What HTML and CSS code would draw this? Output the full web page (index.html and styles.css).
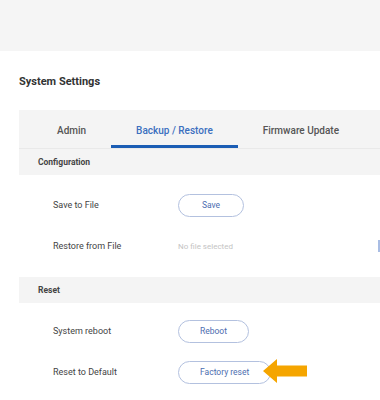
FILE: index.html
```html
<!DOCTYPE html>
<html lang="en">
<head>
    <meta charset="UTF-8">
    <meta name="viewport" content="width=device-width, initial-scale=1.0">
    <title>System Settings</title>
    <link rel="stylesheet" href="styles.css">
</head>
<body>
    <div class="topbar"></div>

    <div class="page">
        <h1>System Settings</h1>

        <div class="panel">
            <div class="tabs">
                <span class="tab">Admin</span>
                <span class="tab active">Backup / Restore</span>
                <span class="tab">Firmware Update</span>
            </div>

            <div class="section-head">Configuration</div>
            <div class="section-body">
                <div class="row">
                    <span class="label">Save to File</span>
                    <button class="btn">Save</button>
                </div>
                <div class="row">
                    <span class="label">Restore from File</span>
                    <span class="file-name">No file selected</span>
                    <span class="browse-edge"></span>
                </div>
            </div>

            <div class="section-head">Reset</div>
            <div class="section-body reset">
                <div class="row">
                    <span class="label">System reboot</span>
                    <button class="btn">Reboot</button>
                </div>
                <div class="row">
                    <span class="label">Reset to Default</span>
                    <span class="btn-wrap">
                        <button class="btn">Factory reset</button>
                        <svg class="pointer" width="44" height="26" viewBox="0 0 44 26">
                            <polygon points="0,13 14,1 14,7.5 44,7.5 44,18.5 14,18.5 14,25" fill="#f5a500"/>
                        </svg>
                    </span>
                </div>
            </div>
        </div>
    </div>
</body>
</html>
```

FILE: styles.css
```css
body {
    margin: 0;
    font-family: Roboto, "Liberation Sans", sans-serif;
    color: #333;
    overflow: hidden;
    background: #fff;
}
.topbar {
    height: 51px;
    background-color: #f5f5f5;
}
.page {
    padding: 24px 0 0 19px;
}
h1 {
    margin: 0 0 21px;
    font-size: 11px;
    line-height: 14px;
    font-weight: bold;
    color: #333;
}
.panel {
    width: 420px;
}
.tabs {
    display: flex;
    height: 38px;
    padding-left: 13px;
    background-color: #f4f4f4;
    border-bottom: 1px solid #e9e9e9;
}
.tab {
    display: flex;
    align-items: center;
    padding: 5px 25px 0;
    border-bottom: 3px solid transparent;
    font-size: 10px;
    font-weight: 500;
    color: #555;
}
.tab.active {
    color: #3b6fbf;
    border-bottom-color: #1b5db4;
}
.section-head {
    height: 26px;
    line-height: 26px;
    padding-left: 19px;
    background-color: #f4f4f4;
    font-size: 8.5px;
    font-weight: bold;
    color: #444;
}
.section-body {
    padding: 10px 0 10px;
}
.section-body.reset {
    padding: 8px 0;
}
.row {
    display: flex;
    align-items: center;
    height: 40px;
    padding-left: 34px;
}
.row + .row {
    height: 42px;
}
.label {
    width: 125px;
    font-size: 9px;
    color: #444;
}
.file-name {
    width: 200px;
    font-size: 8px;
    color: #c4c4c4;
}
.browse-edge {
    width: 40px;
    height: 12px;
    border-left: 2px solid #a9bde4;
}
.btn {
    min-width: 66px;
    height: 23px;
    padding: 0 21px;
    border: 1px solid #b3c1df;
    border-radius: 12px;
    background: #fff;
    font-family: inherit;
    font-size: 8.5px;
    color: #4c6db0;
}
.btn-wrap {
    position: relative;
    display: inline-flex;
}
.pointer {
    position: absolute;
    left: calc(100% - 8px);
    top: -3px;
}
```
